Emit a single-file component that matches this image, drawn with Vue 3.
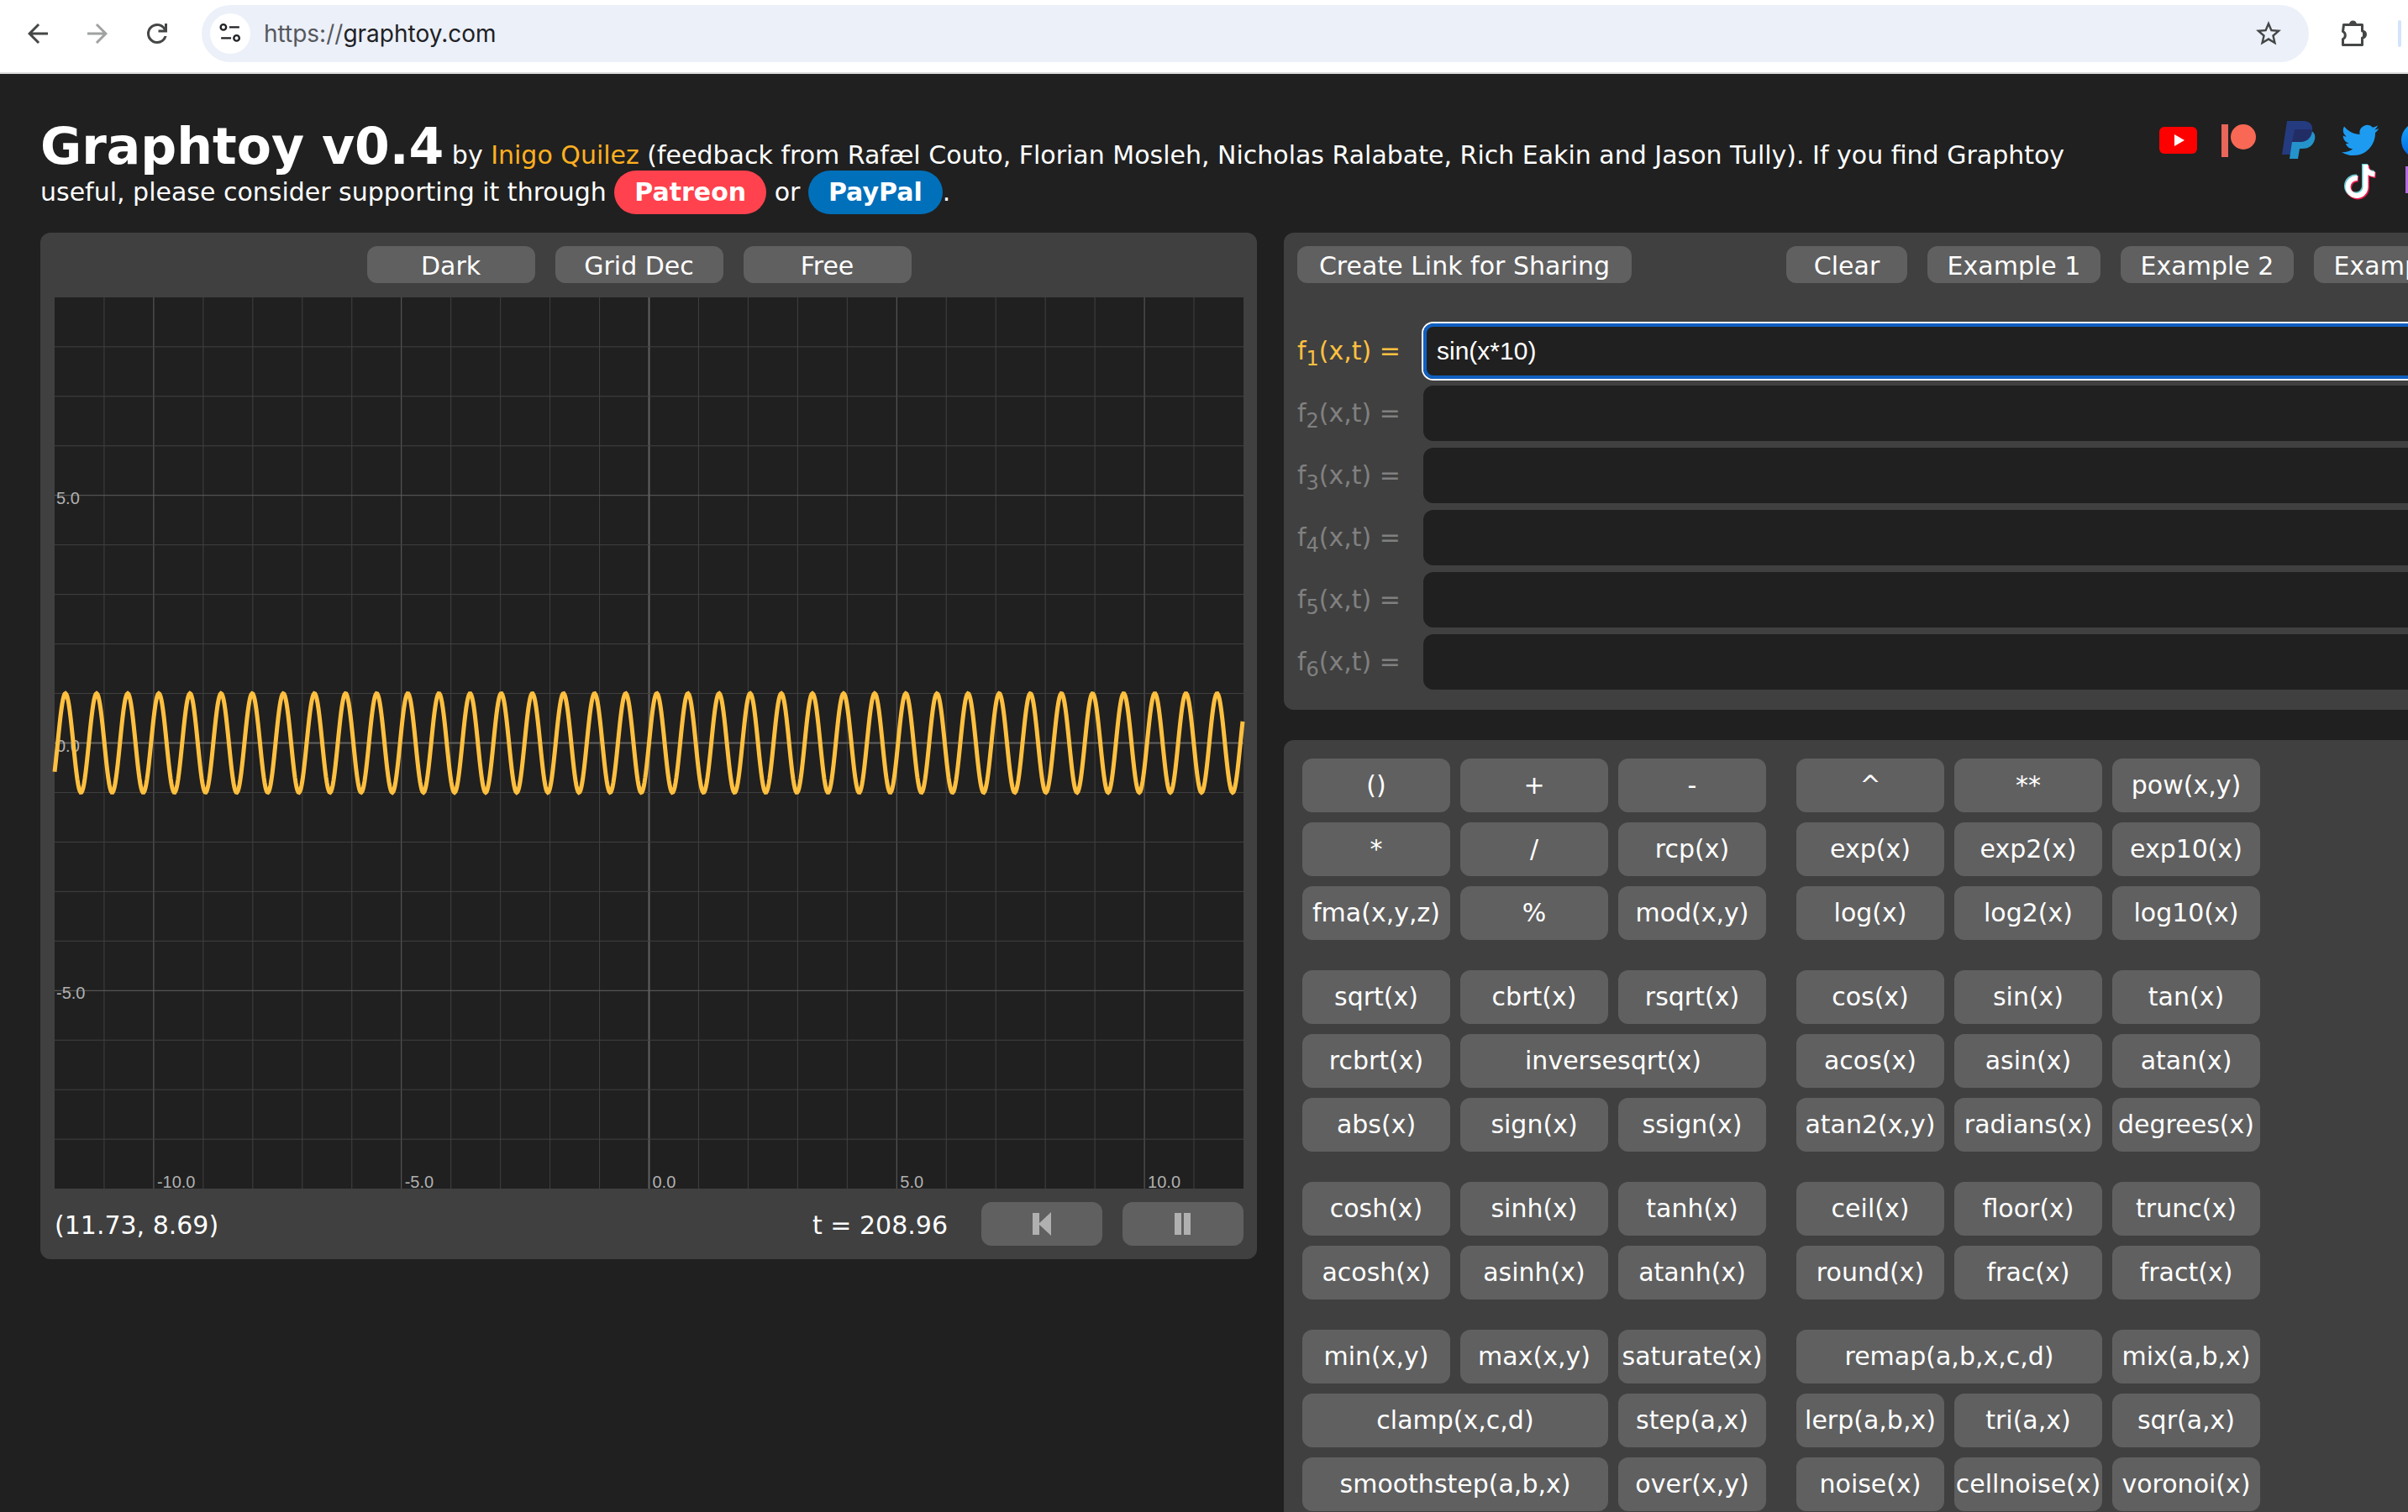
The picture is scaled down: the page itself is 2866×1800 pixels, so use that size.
<script setup>
import { ref } from 'vue'

const url = ref('https://graphtoy.com')
const formulas = ref(['sin(x*10)', '', '', '', '', ''])
const active = 0

const W = 1415
const H = 1061
const unit = W / 24
const cx = W / 2
const cy = H / 2
const toX = (x) => cx + x * unit
const toY = (y) => cy - y * unit

const range = (n) => Array.from({ length: 2 * n + 1 }, (_, i) => i - n)
const kind = (n) => (n === 0 ? 'axis' : n % 5 === 0 ? 'major' : 'minor')
const verticals = range(11).map((n) => ({ n, at: toX(n), kind: kind(n) }))
const horizontals = range(8).map((n) => ({ n, at: toY(n), kind: kind(n) }))
const xLabels = [-10, -5, 0, 5, 10]
const yLabels = [5, 0, -5]

const curve = Array.from({ length: W }, (_, px) => {
  const x = (px - cx) / unit
  return `${px},${toY(Math.sin(x * 10)).toFixed(2)}`
}).join(' ')

const f = (label, wide = false) => ({ label, wide })
const groups = [
  ['()', '+', '-', '*', '/', 'rcp(x)', 'fma(x,y,z)', '%', 'mod(x,y)'],
  ['^', '**', 'pow(x,y)', 'exp(x)', 'exp2(x)', 'exp10(x)', 'log(x)', 'log2(x)', 'log10(x)'],
  ['sqrt(x)', 'cbrt(x)', 'rsqrt(x)', 'rcbrt(x)', f('inversesqrt(x)', true), 'abs(x)', 'sign(x)', 'ssign(x)'],
  ['cos(x)', 'sin(x)', 'tan(x)', 'acos(x)', 'asin(x)', 'atan(x)', 'atan2(x,y)', 'radians(x)', 'degrees(x)'],
  ['cosh(x)', 'sinh(x)', 'tanh(x)', 'acosh(x)', 'asinh(x)', 'atanh(x)'],
  ['ceil(x)', 'floor(x)', 'trunc(x)', 'round(x)', 'frac(x)', 'fract(x)'],
  ['min(x,y)', 'max(x,y)', 'saturate(x)', f('clamp(x,c,d)', true), 'step(a,x)', f('smoothstep(a,b,x)', true), 'over(x,y)'],
  [f('remap(a,b,x,c,d)', true), 'mix(a,b,x)', 'lerp(a,b,x)', 'tri(a,x)', 'sqr(a,x)', 'noise(x)', 'cellnoise(x)', 'voronoi(x)'],
].map((group) => group.map((item) => (typeof item === 'string' ? f(item) : item)))
</script>

<template>
  <div class="browser">
    <nav class="toolbar" aria-label="Browser">
      <button class="tool" aria-label="Back">
        <svg viewBox="0 0 24 24"><path d="M20 11H7.8l5.6-5.6L12 4l-8 8 8 8 1.4-1.4L7.8 13H20z" /></svg>
      </button>
      <button class="tool faded" aria-label="Forward">
        <svg viewBox="0 0 24 24"><path d="M4 11h12.2l-5.6-5.6L12 4l8 8-8 8-1.4-1.4 5.6-5.6H4z" /></svg>
      </button>
      <button class="tool" aria-label="Reload">
        <svg viewBox="0 0 24 24"><path d="M12 20a8 8 0 1 1 0-16c2.4 0 4.500 1 6 2.750V4h2v7h-7V9h4.200A6 6 0 1 0 17.650 14h2.100A8 8 0 0 1 12 20z" /></svg>
      </button>
      <div class="omnibox">
        <button class="site" aria-label="Site information">
          <svg viewBox="0 0 24 24" fill="none" stroke="#202124" stroke-width="2.200">
            <circle cx="4.500" cy="5" r="3" /><path d="M11 5h11M2 17h11" /><circle cx="19" cy="17" r="3" />
          </svg>
        </button>
        <a class="url" :href="url"><span>https://</span>graphtoy.com</a>
        <button class="tool star" aria-label="Bookmark">
          <svg viewBox="0 0 24 24"><path d="M22 9.240l-7.190-.62L12 2 9.190 8.630 2 9.240l5.460 4.730L5.820 21 12 17.270 18.180 21l-1.630-7.030zM12 15.400l-3.760 2.270 1-4.280-3.320-2.880 4.380-.38L12 6.100l1.710 4.040 4.380.38-3.320 2.880 1 4.280z" /></svg>
        </button>
      </div>
      <button class="tool" aria-label="Extensions">
        <svg viewBox="0 0 36 36">
          <path d="M6.500 7.500h22v7.500a4 4 0 0 1 0 8v8.500h-23V24.500a5 5 0 0 0 0-9z" fill="none" stroke="#444746" stroke-width="3" stroke-linejoin="round" />
          <path d="M13 7a4.500 4.500 0 0 1 9 0zM29 14.500a4.500 4.500 0 0 1 0 9z" />
        </svg>
      </button>
      <span class="divider"></span>
    </nav>

    <div class="page">
      <header class="header">
        <div class="intro">
          <h1>Graphtoy v0.4</h1>
          by <a class="author" href="#">Inigo Quilez</a> (feedback from Rafæl Couto, Florian Mosleh, Nicholas Ralabate, Rich Eakin and Jason Tully). If you find Graphtoy useful, please consider supporting it through
          <a class="pill patreon" href="#">Patreon</a> or <a class="pill paypal" href="#">PayPal</a>.
        </div>
        <div class="social">
          <a href="#" aria-label="YouTube">
            <svg viewBox="0 0 48 48"><rect x="2" y="8" width="45" height="32" rx="6" fill="#f00" /><path d="M20 17v14l12-7z" fill="#fff" /></svg>
          </a>
          <a href="#" aria-label="Patreon">
            <svg viewBox="0 0 48 48"><path d="M4 5h8v39H4z" fill="#e8665a" /><circle cx="30" cy="20" r="15" fill="#f96854" /></svg>
          </a>
          <a href="#" aria-label="PayPal">
            <svg viewBox="0 0 48 48">
              <path d="M10 1h19c9 0 12 5 11 12-1 9-7 13-16 13h-7l-2 15H4z" fill="#253b80" />
              <path d="M39 13c4 2 5 6 4 10-2 8-8 11-15 11h-3l-2 12H13l3-20h8c9 0 14-4 15-13z" fill="#2493cc" />
              <path d="M19 11h18c2 0 3 1 3 2-1 9-7 13-16 13h-8z" fill="#222d65" />
            </svg>
          </a>
          <a href="#" aria-label="Twitter">
            <svg viewBox="0 0 24 24"><path fill="#1d9bf0" d="M23.600 5c-.8.400-1.700.600-2.600.750.900-.600 1.650-1.400 2-2.450-.9.500-1.850.900-2.900 1.100a4.550 4.550 0 0 0-7.750 4.150C8.600 8.350 5.200 6.500 3 3.750c-1.200 2.050-.600 4.750 1.400 6.100-.750 0-1.450-.250-2.050-.550 0 2.200 1.500 4.150 3.650 4.600-.650.150-1.350.200-2.050.050.600 1.800 2.250 3.100 4.250 3.150A9.100 9.100 0 0 1 1.500 19c2 1.300 4.400 2.050 7 2.050 8.400 0 13-7 13-13v-.600c.850-.600 1.600-1.450 2.100-2.450z" /></svg>
          </a>
          <a href="#" aria-label="Facebook">
            <svg viewBox="0 0 48 48">
              <defs><linearGradient id="fb" x1="0" y1="0" x2="0" y2="1"><stop offset="0" stop-color="#18acfe" /><stop offset="1" stop-color="#0163e0" /></linearGradient></defs>
              <circle cx="24" cy="24" r="22" fill="url(#fb)" /><path d="M21 46V30h-5v-7h5v-4c0-6 3-9 8-9l4 .5V16h-3c-2 0-3 1-3 3v4h6l-1 7h-5v16z" fill="#fff" />
            </svg>
          </a>
          <a href="#" class="second" aria-label="TikTok">
            <svg viewBox="0 0 48 48" fill="none" stroke-width="7">
              <path d="M21 20a10.500 10.500 0 1 0 9.500 10.500V4c0 7 4 11 11 11.500" stroke="#69c9d0" />
              <path d="M23 22a10.500 10.500 0 1 0 9.500 10.500V6c0 7 4 11 11 11.500" stroke="#ee1d52" />
              <path d="M22 21a10.500 10.500 0 1 0 9.500 10.500V5c0 7 4 11 11 11.500" stroke="#fff" stroke-width="6" />
            </svg>
          </a>
          <a href="#" aria-label="Twitch">
            <svg viewBox="0 0 48 48"><path d="M7 7h34v22l-10 10h-8l-6 6v-6H7z" fill="#b66be0" /><path d="M13 12h23v15l-6 5H13z" fill="#fff" /></svg>
          </a>
        </div>
      </header>

      <main class="columns">
        <section class="panel graph">
          <div class="options">
            <button class="btn">Dark</button>
            <button class="btn">Grid Dec</button>
            <button class="btn">Free</button>
          </div>
          <svg class="plot" :viewBox="`0 0 ${W} ${H}`" role="img" aria-label="Graph">
            <line v-for="l in verticals" :key="'v' + l.n" :class="l.kind" :x1="l.at" :x2="l.at" y1="0" :y2="H" />
            <line v-for="l in horizontals" :key="'h' + l.n" :class="l.kind" :y1="l.at" :y2="l.at" x1="0" :x2="W" />
            <text v-for="n in xLabels" :key="'x' + n" :x="toX(n) + 4" :y="H - 1">{{ n.toFixed(1) }}</text>
            <text v-for="n in yLabels" :key="'y' + n" x="2" :y="toY(n) + 10">{{ n.toFixed(1) }}</text>
            <polyline :points="curve" />
          </svg>
          <div class="status">
            <output class="coords">(11.73, 8.69)</output>
            <output>t = 208.96</output>
            <button class="btn" aria-label="Restart">
              <svg viewBox="0 0 24 28"><path d="M1 1h8v26H1z" /><path d="M23 0v28L8 14z" /></svg>
            </button>
            <button class="btn" aria-label="Pause">
              <svg viewBox="0 0 24 28"><path d="M2 1h8v26H2zM13 1h8v26h-8z" /></svg>
            </button>
          </div>
        </section>

        <div class="right">
          <section class="panel formulas">
            <div class="actions">
              <button class="btn share">Create Link for Sharing</button>
              <button class="btn clear">Clear</button>
              <button class="btn">Example 1</button>
              <button class="btn">Example 2</button>
              <button class="btn">Example 3</button>
            </div>
            <div v-for="(_, i) in formulas" :key="i" class="formula" :class="{ active: i === active }">
              <label :for="'formula' + i">f<sub>{{ i + 1 }}</sub>(x,t) =</label>
              <input :id="'formula' + i" v-model="formulas[i]" type="text" spellcheck="false" />
            </div>
          </section>

          <section class="panel functions">
            <div v-for="(group, g) in groups" :key="g" class="group">
              <button v-for="fn in group" :key="fn.label" class="btn" :class="{ wide: fn.wide }">{{ fn.label }}</button>
            </div>
          </section>
        </div>
      </main>
    </div>
  </div>
</template>

<style>
body {
  background: #202020;
}
</style>

<style scoped>
.browser {
  height: 100vh;
  overflow: hidden;
  background: #202020;
  color: #fff;
  font-family: Verdana, "DejaVu Sans", sans-serif;
  font-size: 30px;
  line-height: 44px;
}

button {
  border: 0;
  padding: 0;
  font: inherit;
  color: inherit;
}

/* browser toolbar */
.toolbar {
  display: flex;
  align-items: center;
  gap: 35px;
  box-sizing: border-box;
  height: 88px;
  padding: 0 8px 6px 27px;
  background: #fff;
  border-bottom: 2px solid #dcdcdc;
}
.tool {
  display: flex;
  flex: none;
  width: 36px;
  height: 36px;
  background: none;
}
.tool svg {
  width: 100%;
  height: 100%;
  fill: #444746;
}
.faded {
  opacity: 0.5;
}
.omnibox {
  display: flex;
  flex: 1;
  align-items: center;
  box-sizing: border-box;
  height: 68px;
  padding: 0 30px 0 10px;
  border-radius: 34px;
  background: #ecf0f9;
}
.site {
  display: flex;
  align-items: center;
  justify-content: center;
  width: 48px;
  height: 48px;
  border-radius: 50%;
  background: #fff;
}
.site svg {
  width: 26px;
  height: 26px;
}
.url {
  flex: 1;
  margin-left: 16px;
  color: #202124;
  font-family: Inter, Roboto, sans-serif;
  font-size: 28px;
  text-decoration: none;
}
.url span {
  color: #55585c;
}
.divider {
  flex: none;
  width: 4px;
  height: 32px;
  border-radius: 2px;
  background: #d3e3fd;
}

/* page */
.page {
  width: calc(100% + 158px);
  box-sizing: border-box;
  padding: 48px;
}
.header {
  display: flex;
  align-items: flex-start;
  height: 141px;
}
.intro {
  flex: 1;
  padding-top: 16px;
}
h1 {
  display: inline;
  margin: 0;
  font-size: 60px;
  line-height: 44px;
}
.author {
  color: #ffb020;
  text-decoration: none;
}
.pill {
  display: inline-block;
  padding: 4px 24px;
  margin: -4px 0;
  border-radius: 26px;
  color: #fff;
  font-weight: bold;
  text-decoration: none;
}
.patreon {
  background: #ff424d;
}
.paypal {
  background: #0070ba;
}
.social {
  display: grid;
  flex: none;
  grid-template-columns: repeat(5, 72px);
  margin: 7px 60px 0 0;
}
.social a {
  display: flex;
  justify-content: center;
  height: 48px;
}
.social svg {
  width: 48px;
  height: 48px;
}
.second {
  grid-column: 4;
}

.columns {
  display: grid;
  grid-template-columns: 1fr 1fr;
  align-items: start;
  gap: 32px;
}
.panel {
  border-radius: 12px;
  background: #404040;
}
.btn {
  height: 44px;
  border-radius: 12px;
  background: #606060;
  white-space: nowrap;
}

/* graph panel */
.graph {
  padding: 16px 16px 16px 17px;
}
.options {
  display: flex;
  justify-content: center;
  gap: 24px;
  padding-right: 24px;
}
.options .btn,
.actions .btn {
  padding-top: 2px;
}
.options .btn {
  width: 200px;
}
.plot {
  display: block;
  width: 100%;
  margin: 17px 0 16px;
  overflow: visible;
  background: #202020;
}
.plot line {
  stroke: #404040;
  stroke-width: 1px;
}
.plot .major {
  stroke: #606060;
}
.plot .axis {
  stroke: #606060;
  stroke-width: 2px;
}
.plot text {
  fill: #b0b0b0;
  font: 20px Arial, "Liberation Sans", sans-serif;
}
.plot polyline {
  fill: none;
  stroke: #ffc040;
  stroke-width: 5px;
}
.status {
  display: flex;
  align-items: center;
  gap: 24px;
}
.status output {
  padding-top: 4px;
}
.coords {
  flex: 1;
}
.status .btn {
  width: 144px;
  height: 52px;
}
.status output + .btn {
  margin-left: 16px;
}
.status svg {
  display: block;
  width: 24px;
  height: 28px;
  margin: 0 auto;
  fill: #b0b0b0;
}

/* formulas */
.right {
  display: grid;
  gap: 36px;
}
.formulas {
  display: grid;
  gap: 8px;
  padding: 16px 16px 24px;
}
.actions {
  display: flex;
  gap: 24px;
  margin-bottom: 40px;
}
.actions .btn {
  width: 206px;
}
.actions .share {
  width: 398px;
  margin-right: auto;
}
.actions .clear {
  width: 144px;
}
.formula {
  display: flex;
  align-items: center;
  color: #808080;
}
.formula label {
  flex: none;
  width: 150px;
}
sub {
  font-size: 24px;
  line-height: 0;
}
.formula input {
  flex: 1;
  box-sizing: border-box;
  height: 66px;
  padding: 0 16px;
  border: 0;
  border-radius: 12px;
  background: #202020;
  color: #fff;
  font: 30px Arial, "Liberation Sans", sans-serif;
}
.active {
  color: #ffc040;
}
.active input {
  box-shadow: inset 0 0 0 4px #105fc0, 0 0 0 2px #fff;
}

/* functions */
.functions {
  display: grid;
  grid-template-columns: max-content max-content;
  gap: 36px;
  padding: 22px;
}
.group {
  display: grid;
  grid-template-columns: repeat(3, 176px);
  gap: 12px;
}
.group .btn {
  height: 64px;
}
.wide {
  grid-column: span 2;
}
</style>
